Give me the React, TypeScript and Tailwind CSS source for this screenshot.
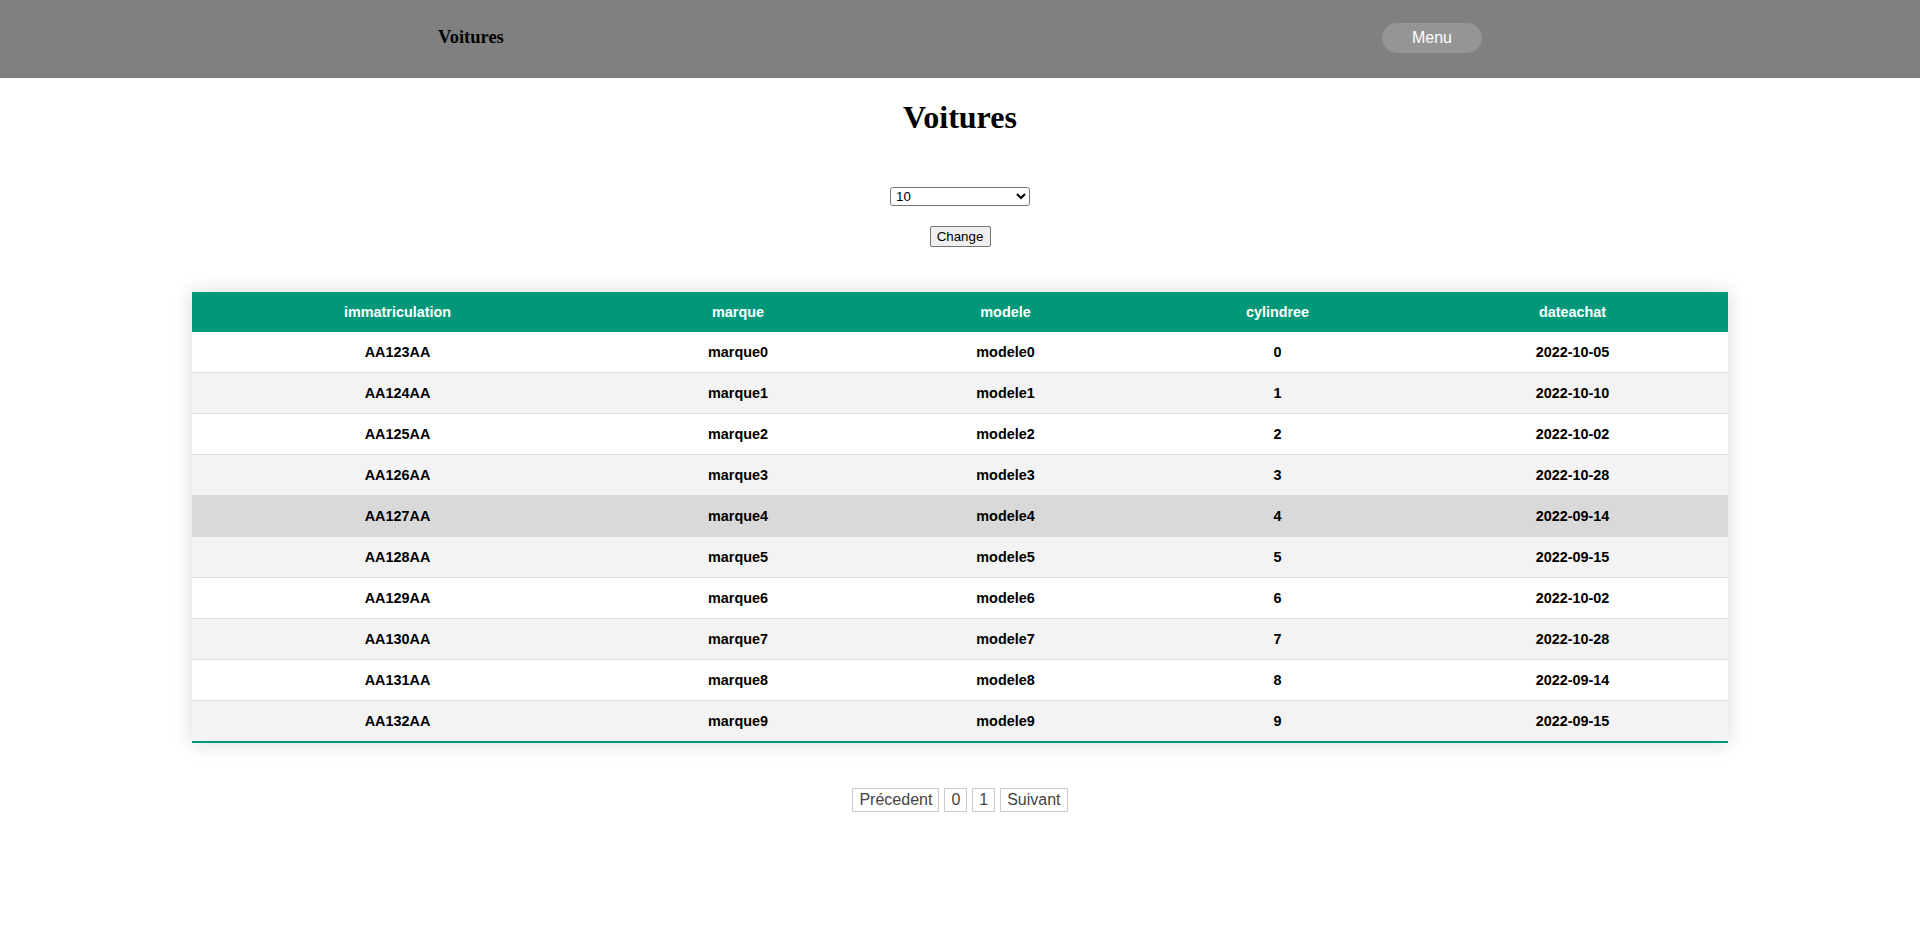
import React from "react";

const cars = [
  { immat: "AA123AA", marque: "marque0", modele: "modele0", cyl: 0, date: "2022-10-05" },
  { immat: "AA124AA", marque: "marque1", modele: "modele1", cyl: 1, date: "2022-10-10" },
  { immat: "AA125AA", marque: "marque2", modele: "modele2", cyl: 2, date: "2022-10-02" },
  { immat: "AA126AA", marque: "marque3", modele: "modele3", cyl: 3, date: "2022-10-28" },
  { immat: "AA127AA", marque: "marque4", modele: "modele4", cyl: 4, date: "2022-09-14" },
  { immat: "AA128AA", marque: "marque5", modele: "modele5", cyl: 5, date: "2022-09-15" },
  { immat: "AA129AA", marque: "marque6", modele: "modele6", cyl: 6, date: "2022-10-02" },
  { immat: "AA130AA", marque: "marque7", modele: "modele7", cyl: 7, date: "2022-10-28" },
  { immat: "AA131AA", marque: "marque8", modele: "modele8", cyl: 8, date: "2022-09-14" },
  { immat: "AA132AA", marque: "marque9", modele: "modele9", cyl: 9, date: "2022-09-15" },
];

const columns = ["immatriculation", "marque", "modele", "cylindree", "dateachat"];

export default function App() {
  const hovered = 4;

  return (
    <div className="min-h-[929px] bg-white font-['Liberation_Serif',serif] text-black">
      <header className="h-[78px] bg-[#808080] flex items-center justify-between px-[438px] pb-[2px]">
        <span className="text-[18.5px] font-bold">Voitures</span>
        <button className="w-[100px] h-[30px] rounded-full bg-[#959595] text-white text-[16px] font-['Liberation_Sans',Arial,sans-serif]">
          Menu
        </button>
      </header>

      <h1 className="mt-[21px] text-center text-[32px] leading-[37px] font-bold">Voitures</h1>

      <div className="mt-[51px] flex flex-col items-center font-['Liberation_Sans',Arial,sans-serif]">
        <select
          defaultValue="10"
          className="w-[140px] h-[19px] border border-[#767676] rounded-[3px] bg-white text-[13.33px] leading-[15px] pl-[1px]"
        >
          <option value="5">5</option>
          <option value="10">10</option>
          <option value="20">20</option>
        </select>
        <button className="mt-[20px] w-[61px] h-[21px] border border-[#767676] rounded-[2px] bg-[#efefef] text-[13.33px] leading-[15px]">
          Change
        </button>
      </div>

      <div className="mt-[45px] flex justify-center font-['Liberation_Sans',Arial,sans-serif]">
        <table className="w-[1536px] table-fixed border-collapse text-[14.4px] shadow-[0_0_20px_rgba(0,0,0,0.15)]">
          <colgroup>
            <col className="w-[411px]" />
            <col className="w-[270px]" />
            <col className="w-[265px]" />
            <col className="w-[279px]" />
            <col className="w-[311px]" />
          </colgroup>
          <thead>
            <tr className="bg-[#009879] text-white">
              {columns.map((c) => (
                <th key={c} className="py-[12px] px-[15px] leading-[16px] font-bold text-center">
                  {c}
                </th>
              ))}
            </tr>
          </thead>
          <tbody>
            {cars.map((car, i) => {
              const last = i === cars.length - 1;
              const bg = i === hovered ? "bg-[#d9d9d9]" : i % 2 === 1 ? "bg-[#f3f3f3]" : "bg-white";
              return (
                <tr
                  key={car.immat}
                  className={`${bg} ${last ? "border-b-2 border-[#009879]" : "border-b border-[#dddddd]"}`}
                >
                  {[car.immat, car.marque, car.modele, car.cyl, car.date].map((v, j) => (
                    <td key={j} className="py-[12px] px-[15px] leading-[16px] font-bold text-center">
                      {v}
                    </td>
                  ))}
                </tr>
              );
            })}
          </tbody>
        </table>
      </div>

      <div className="mt-[45px] flex justify-center gap-[5px] font-['Liberation_Sans',Arial,sans-serif] text-[16px] text-[#444]">
        {["Précedent", "0", "1", "Suivant"].map((p) => (
          <button key={p} className="border border-[#cccccc] px-[6px] py-[2px] leading-[18px]">
            {p}
          </button>
        ))}
      </div>
    </div>
  );
}
